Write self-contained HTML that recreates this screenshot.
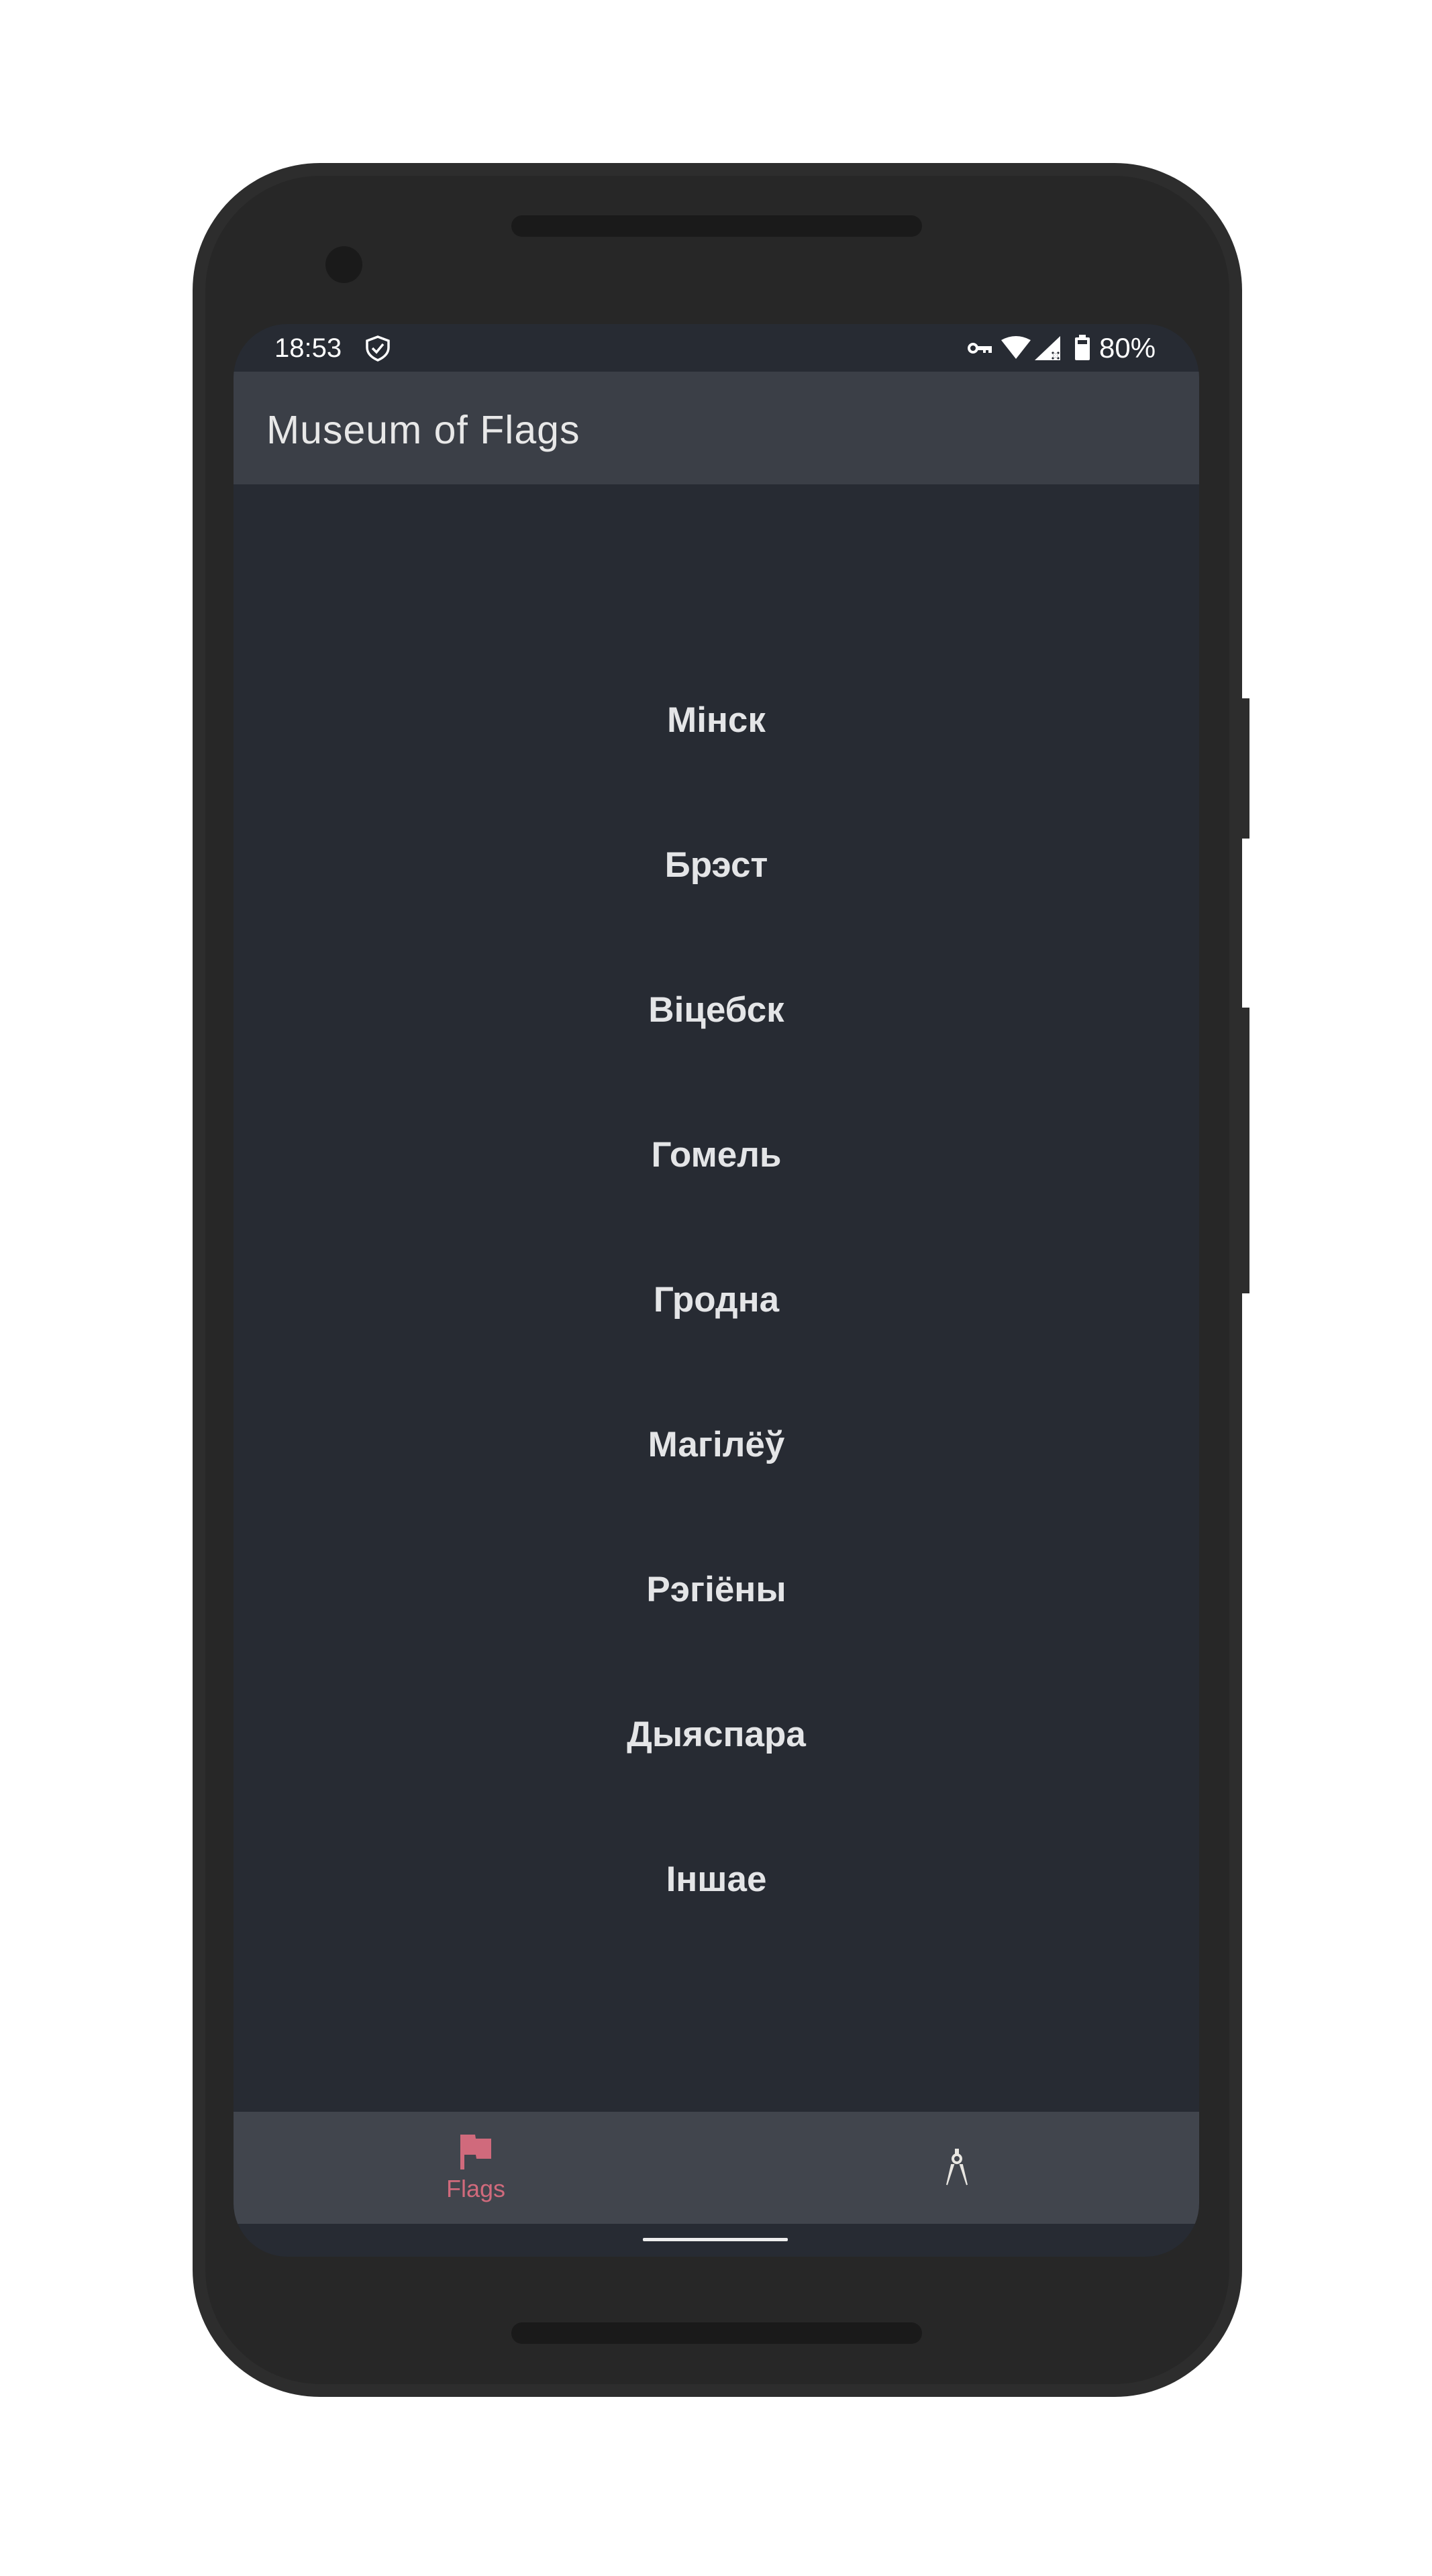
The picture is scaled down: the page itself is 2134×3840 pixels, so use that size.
<!DOCTYPE html>
<html><head><meta charset="utf-8"><style>
*{margin:0;padding:0;box-sizing:border-box}
body{width:2134px;height:3840px;background:#fff;position:relative;overflow:hidden;font-family:"Liberation Sans","DejaVu Sans",sans-serif}
.abs{position:absolute}
.outer{left:287px;top:243px;width:1564px;height:3330px;background:#2d2d2d;border-radius:190px}
.inner{left:306px;top:262px;width:1526px;height:3292px;background:#272727;border-radius:172px}
.btn{background:#2d2d2d;left:1848px;width:14px}
.spk{background:#1a1a1a;border-radius:20px;left:762px;width:612px;height:32px}
.screen{left:348px;top:483px;width:1439px;height:2881px;background:#272b33;border-radius:80px;overflow:hidden}
.appbar{left:0;top:71px;width:1439px;height:168px;background:#3b3f47}
.title{left:49px;top:3px;line-height:168px;font-size:59px;letter-spacing:1px;color:#e8e8e8}
.item{left:0;width:1439px;text-align:center;font-weight:bold;font-size:53px;color:#e4e5e7;line-height:80px}
.nav{left:0;top:2665px;width:1439px;height:167px;background:#41454d}
.st{color:#fff;font-size:40px;top:14px;line-height:44px}
</style></head><body>
<div class="abs outer"></div>
<div class="abs btn" style="top:1041px;height:209px"></div>
<div class="abs btn" style="top:1502px;height:426px"></div>
<div class="abs inner"></div>
<div class="abs spk" style="top:321px"></div>
<div class="abs spk" style="top:3462px"></div>
<div class="abs" style="left:485px;top:367px;width:55px;height:55px;border-radius:50%;background:#1a1a1a"></div>
<div class="abs screen">
  <div class="abs st" style="left:61px">18:53</div>
  <svg class="abs" style="left:194px;top:16px" width="42" height="40" viewBox="0 0 42 40"><path d="M21 3 L37 9 V19 C37 28 30 34 21 38 C12 34 5 28 5 19 V9 Z" fill="none" stroke="#fff" stroke-width="3.5"/><path d="M13 20 L19 26 L29 14" fill="none" stroke="#fff" stroke-width="3.5"/></svg>
  <svg class="abs" style="left:1094px;top:16px" width="200" height="40" viewBox="0 0 200 40"><circle cx="8" cy="20" r="6" fill="none" stroke="#fff" stroke-width="4"/><path d="M13 17 H36 V27 H31 V23 H27 V27 H23 V23 H13 Z" fill="#fff"/><path d="M50 8 Q72 -4 94 8 L72 36 Z" fill="#fff"/><path d="M100 38 L138 2 V38 Z" fill="#fff"/><path d="M126 26 L136 36 M136 26 L126 36" stroke="#272b33" stroke-width="3"/><path d="M128 28 L134 34 M134 28 L128 34" stroke="#fff" stroke-width="2.5"/><rect x="160" y="4" width="22" height="34" rx="2" fill="#fff"/><rect x="166" y="0" width="10" height="5" fill="#fff"/><rect x="164" y="8" width="14" height="6" fill="#272b33"/></svg>
  <div class="abs st" style="left:1290px;font-size:42px">80%</div>
  <div class="abs appbar"><div class="abs title">Museum of Flags</div></div>
  <div class="abs item" style="top:551px">Мінск</div>
  <div class="abs item" style="top:767px">Брэст</div>
  <div class="abs item" style="top:983px">Віцебск</div>
  <div class="abs item" style="top:1199px">Гомель</div>
  <div class="abs item" style="top:1415px">Гродна</div>
  <div class="abs item" style="top:1631px">Магілёў</div>
  <div class="abs item" style="top:1847px">Рэгіёны</div>
  <div class="abs item" style="top:2063px">Дыяспара</div>
  <div class="abs item" style="top:2279px">Іншае</div>
  <div class="abs nav">
    <svg class="abs" style="left:338px;top:34px" width="46" height="52" viewBox="0 0 46 52"><path d="M0 0 H22 L23 6 H46 V36 H24 L23 30 H6 V52 H0 Z" fill="#d06a7c"/></svg>
    <div class="abs" style="left:300px;top:90px;width:122px;text-align:center;font-size:36px;color:#d06a7c;line-height:50px">Flags</div>
    <svg class="abs" style="left:1060px;top:55px" width="36" height="56" viewBox="0 0 36 56"><rect x="15" y="0" width="6" height="8" fill="#e8e6e1"/><circle cx="18" cy="15" r="6" fill="none" stroke="#e8e6e1" stroke-width="4"/><path d="M13 24 L10 24 L3 54 Z M23 24 L26 24 L33 54 Z" fill="#e8e6e1" stroke="#e8e6e1" stroke-width="2"/></svg>
  </div>
  <div class="abs" style="left:610px;top:2853px;width:216px;height:5px;background:#eee;border-radius:2px"></div>
</div>
</body></html>
